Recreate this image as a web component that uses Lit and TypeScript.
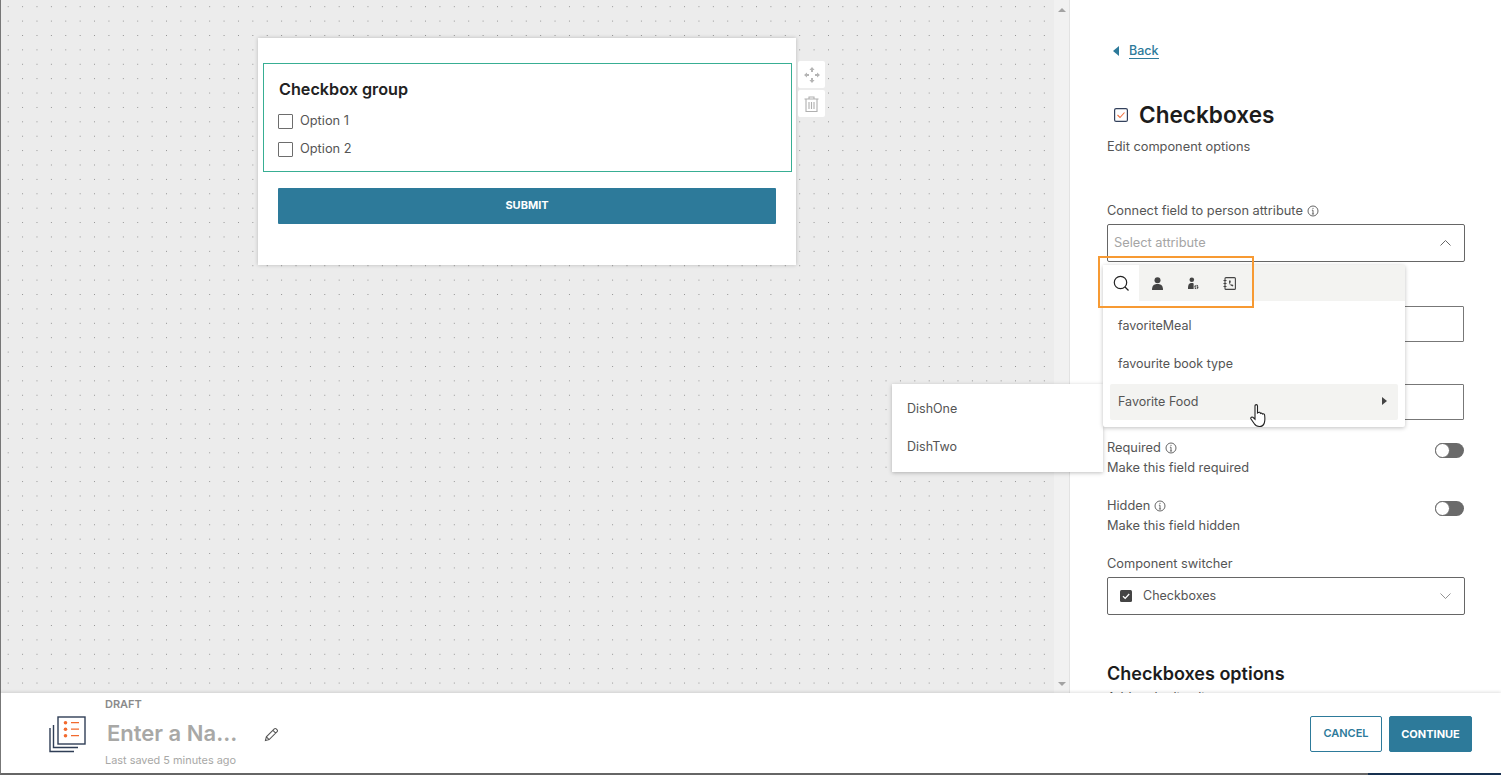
import { LitElement, html, css } from "lit";
import { customElement } from "lit/decorators.js";

const info = html`<svg class="info" width="12" height="12" viewBox="0 0 12 12" fill="none" stroke="#666" stroke-width="1"><circle cx="6" cy="6" r="5"/><path d="M6 5.200V9M4.900 9h2.200M4.900 5.200H6"/><circle cx="6" cy="3.300" r=".6" fill="#666" stroke="none"/></svg>`;

const toggle = html`<span class="toggle"><span class="knob"></span></span>`;

@customElement("app-root")
export class AppRoot extends LitElement {
  static styles = css`
    :host { display: flex; flex-direction: column; position: relative; width: 1501px; height: 775px; overflow: hidden; font-family: Inter, "Noto Sans", sans-serif; color: #555; font-size: 12.8px; background: #fff; }
    .main { display: flex; height: 693px; flex: none; }
    .canvas { width: 1054px; flex: none; background-color: #ececec; background-image: radial-gradient(circle at center, #8f8f8f 0, #8f8f8f .55px, transparent .9px); background-size: 14.4px 14.4px; background-position: 0 -.5px; display: flex; align-items: flex-start; padding: 38px 0 0 257px; box-sizing: border-box; gap: 2px; border-left: 1px solid #777; }
    .card { width: 538px; height: 227px; box-sizing: border-box; background: #fff; box-shadow: 0 0 4px rgba(0,0,0,.22); padding: 25px 4px 0 5px; flex: none; }
    .group { height: 109px; box-sizing: border-box; border: 1px solid #38ae93; padding: 15px 14px 0; }
    .group h3 { margin: 0 0 8px 1px; font-size: 16.200px; line-height: 20px; font-weight: 600; color: #222; }
    .opt { display: flex; align-items: center; gap: 7px; height: 28px; line-height: 16px; color: #555; font-size: 12.800px; }
    .box { width: 13px; height: 13px; border: 1px solid #6d6d6d; border-radius: 1px; flex: none; }
    .submit { margin: 16px 16px 0 15px; height: 36px; padding-bottom: 2px; box-sizing: border-box; display: flex; align-items: center; justify-content: center; background: #2d7a9a; color: #fff; font-size: 11px; font-weight: 700; border-radius: 1px; }
    .tools { display: flex; flex-direction: column; gap: 2px; padding-top: 23px; }
    .tool { width: 27px; height: 27px; background: #fff; border-radius: 2px; display: flex; align-items: center; justify-content: center; }
    .scroll { width: 16px; flex: none; background: #f1f1f1; display: flex; flex-direction: column; justify-content: space-between; align-items: center; padding: 8px 0 7px; box-sizing: border-box; border-right: 1px solid #e2e2e2; }
    .panel { flex: 1; min-width: 0; overflow: hidden; padding: 43px 36px 0 37px; box-sizing: border-box; }
    .back { display: flex; align-items: center; gap: 10px; height: 16px; margin-left: 6px; color: #2d7a9a; font-size: 12.500px; font-weight: 500; }
    .back span { border-bottom: 1px solid #2d7a9a; line-height: 15px; }
    .title { display: flex; align-items: center; gap: 11px; margin: 40px 0 0 7px; height: 32px; }
    .title h1 { margin: 0; font-size: 22.600px; line-height: 32px; font-weight: 600; color: #1c1c1c; }
    .sub { line-height: 16px; margin-top: 8px; }
    .lab { display: flex; align-items: center; gap: 4px; line-height: 16px; height: 16px; color: #555; }
    .select { height: 38px; box-sizing: border-box; border: 1px solid #666; border-radius: 2px; display: flex; align-items: center; padding: 0 13px 0 6px; justify-content: space-between; margin-top: 5px; }
    .ph { color: #a5a5a5; padding-bottom: 2px; }
    .input { height: 36px; box-sizing: border-box; border: 1px solid #777; margin-right: 1px; border-radius: 1px; }
    .toggle-row { display: flex; justify-content: space-between; align-items: flex-start; height: 40px; }
    .rowsub { line-height: 16px; margin-top: 4px; }
    .toggle { width: 29px; height: 15px; margin: 3px 1px 0 0; background: #6a6a6a; border-radius: 8px; display: block; position: relative; }
    .knob { position: absolute; left: 0; top: 0; width: 13px; height: 13px; border: 1px solid #6a6a6a; border-radius: 50%; background: #fff; }
    .switch-val { display: flex; align-items: center; gap: 11px; margin-left: 6px; font-size: 12.500px; padding-bottom: 1px; }
    .panel h2 { margin: 47px 0 0; font-size: 18px; line-height: 24px; font-weight: 600; color: #1c1c1c; }
    .clip { line-height: 16px; margin-top: 4px; }
    .footer { height: 82px; flex: none; box-sizing: border-box; background: #fff; border-left: 1px solid #777; border-bottom: 2px solid #666; box-shadow: 0 -1px 3px rgba(0,0,0,.12); position: relative; display: flex; align-items: flex-start; padding-left: 48px; }
    .footer::after { content: ""; position: absolute; right: 0; bottom: -2px; width: 133px; height: 2px; background: #17304f; }
    .logo { margin-top: 23px; flex: none; }
    .fmeta { margin-left: 18px; display: flex; flex-direction: column; }
    .draft { font-size: 11px; font-weight: 600; color: #8a8a8a; line-height: 12px; margin-top: 5px; }
    .name-row { display: flex; align-items: center; height: 34px; margin-top: 6px; padding-left: 2px; }
    .name { font-size: 22px; font-weight: 600; color: #a8a8a6; line-height: 30px; width: 157px; }
    .pencil { margin-top: 3px; }
    .saved { font-size: 10.900px; line-height: 14px; color: #a8a8a6; margin-top: 3px; }
    .actions { margin-left: auto; display: flex; gap: 7px; margin-top: 23px; padding-right: 29px; }
    .btn { height: 36px; box-sizing: border-box; display: flex; align-items: center; justify-content: center; font-size: 11px; font-weight: 600; border-radius: 2px; border: 1px solid #2d7a9a; }
    .cancel { width: 72px; color: #2d7a9a; background: #fff; padding-bottom: 2px; }
    .continue { width: 83px; color: #fff; background: #2d7a9a; font-weight: 700; }
    .menu { position: absolute; left: 1103px; top: 265px; width: 302px; height: 162px; background: #fff; box-shadow: 0 1px 4px rgba(0,0,0,.25); border-radius: 2px; }
    .tabs { display: flex; height: 36px; background: #f3f3f1; margin-bottom: 6px; }
    .tab { width: 36px; display: flex; align-items: center; justify-content: center; }
    .tab.on { background: #fff; }
    .item { height: 36px; margin: 0 7px 2px; display: flex; align-items: center; justify-content: space-between; padding: 0 11px 0 8px; border-radius: 2px; color: #555; font-size: 12.500px; box-sizing: border-box; }
    .item.hover { background: #f3f3f1; margin-top: 3px; padding-bottom: 2px; }
    .submenu { position: absolute; left: 892px; top: 384px; width: 211px; height: 88px; background: #fff; box-shadow: 0 1px 4px rgba(0,0,0,.25); padding: 5px 15px; box-sizing: border-box; }
    .submenu div { height: 38px; display: flex; align-items: center; color: #555; font-size: 12.500px; }
    .focus { position: absolute; left: 1098px; top: 256px; width: 156px; height: 52px; box-sizing: border-box; border: 2px solid #f79a33; pointer-events: none; }
    .cursor { position: absolute; left: 1250px; top: 404px; }
  `;

  render() {
    return html`
      <div class="main">
        <div class="canvas">
          <div class="card">
            <div class="group">
              <h3>Checkbox group</h3>
              <div class="opt"><span class="box"></span>Option 1</div>
              <div class="opt"><span class="box"></span>Option 2</div>
            </div>
            <div class="submit">SUBMIT</div>
          </div>
          <div class="tools">
            <div class="tool"><svg width="16" height="16" viewBox="0 0 16 16" fill="#b5b5b5"><path d="M8 0l2.600 3H9v2H7V3H5.400zM8 16l-2.600-3H7v-2h2v2h1.600zM0 8l3-2.600V7h2v2H3v1.600zM16 8l-3 2.600V9h-2V7h2V5.400z"/></svg></div>
            <div class="tool"><svg width="15" height="16" viewBox="0 0 15 16" fill="none" stroke="#b0b0b0" stroke-width="1.100"><path d="M.5 3h14M5 3V1h5v2M2 3v12.500h11V3M5 6v7M7.500 6v7M10 6v7"/></svg></div>
          </div>
        </div>
        <div class="scroll">
          <svg width="8" height="4" viewBox="0 0 8 4" fill="#a3a3a3"><path d="M4 0l4 4H0z"/></svg>
          <svg width="8" height="4" viewBox="0 0 8 4" fill="#a3a3a3"><path d="M0 0h8L4 4z"/></svg>
        </div>
        <div class="panel">
          <div class="back"><svg width="6" height="10" viewBox="0 0 6 10" fill="#2d7a9a"><path d="M6 0v10L0 5z"/></svg><span>Back</span></div>
          <div class="title">
            <svg width="14" height="14" viewBox="0 0 14 14" fill="none"><rect x=".6" y=".6" width="12.800" height="12.800" rx="1.500" stroke="#33415c" stroke-width="1.200"/><path d="M3.500 7l2.500 2.500L10.500 4.500" stroke="#f0703f" stroke-width="1.100"/></svg>
            <h1>Checkboxes</h1>
          </div>
          <div class="sub">Edit component options</div>
          <div class="lab" style="margin-top:48px">Connect field to person attribute ${info}</div>
          <div class="select"><span class="ph">Select attribute</span><svg width="11" height="6" viewBox="0 0 11 6" fill="none" stroke="#666"><path d="M.5 5.500l5-5 5 5"/></svg></div>
          <div class="input" style="margin-top:44px"></div>
          <div class="input" style="margin-top:42px"></div>
          <div class="toggle-row" style="margin-top:20px">
            <div><div class="lab">Required ${info}</div><div class="rowsub">Make this field required</div></div>${toggle}
          </div>
          <div class="toggle-row" style="margin-top:18px">
            <div><div class="lab">Hidden ${info}</div><div class="rowsub">Make this field hidden</div></div>${toggle}
          </div>
          <div class="lab" style="margin-top:18px">Component switcher</div>
          <div class="select">
            <span class="switch-val"><svg width="12" height="12" viewBox="0 0 12 12"><rect width="12" height="12" rx="1.500" fill="#444"/><path d="M3 6.200l2.200 2.200L9.200 4" fill="none" stroke="#fff" stroke-width="1.300"/></svg>Checkboxes</span>
            <svg width="11" height="6" viewBox="0 0 11 6" fill="none" stroke="#777" stroke-width=".8"><path d="M.5.500l5 5 5-5"/></svg>
          </div>
          <h2>Checkboxes options</h2>
          <div class="clip">Add and edit a list</div>
        </div>
      </div>
      <div class="footer">
        <svg class="logo" width="38" height="38" viewBox="0 0 38 38" fill="none">
          <path d="M1 12v23.500h24M4.500 9v22.500H29" stroke="#2f3e56" stroke-width="1.400"/>
          <rect x="9" y="1" width="27" height="27" fill="#fff" stroke="#2f3e56" stroke-width="1.400"/>
          <circle cx="16.500" cy="6.700" r="1.800" fill="#f26a2e"/><circle cx="16.500" cy="13.200" r="1.800" fill="#f26a2e"/><circle cx="16.500" cy="19.700" r="1.800" fill="#f26a2e"/>
          <path d="M22 6.700h8M22 13.200h8M22 19.700h8" stroke="#f26a2e" stroke-width="1.300"/>
        </svg>
        <div class="fmeta">
          <div class="draft">DRAFT</div>
          <div class="name-row"><span class="name">Enter a Na...</span>
            <svg class="pencil" width="15" height="15" viewBox="0 0 16 16" fill="none" stroke="#555" stroke-width="1.100"><path d="M1.500 14.500l1-4L11 2a1.400 1.400 0 0 1 2 0l1 1a1.400 1.400 0 0 1 0 2l-8.500 8.500zM9.500 3.500l3 3M2.500 10.500l3 3"/></svg>
          </div>
          <div class="saved">Last saved 5 minutes ago</div>
        </div>
        <div class="actions"><div class="btn cancel">CANCEL</div><div class="btn continue">CONTINUE</div></div>
      </div>
      <div class="submenu"><div>DishOne</div><div>DishTwo</div></div>
      <div class="menu">
        <div class="tabs">
          <div class="tab on"><svg width="17" height="17" viewBox="0 0 17 17" fill="none" stroke="#222" stroke-width="1.200"><circle cx="7.500" cy="7.500" r="6.200"/><path d="M12 12l3.500 3.500"/></svg></div>
          <div class="tab"><svg width="11" height="13" viewBox="0 0 11 13" fill="#444"><circle cx="5.500" cy="3.200" r="3"/><path d="M0 13c0-4 1.500-6 5.500-6s5.500 2 5.500 6z"/></svg></div>
          <div class="tab"><svg width="11" height="13" viewBox="0 0 11 13" fill="#444"><circle cx="3.800" cy="2.700" r="2.300"/><path d="M0 12c0-4 .6-6 3.800-6 .8 0 1.400.1 1.800.4V12z"/><circle cx="8.300" cy="10" r="1.500" fill="none" stroke="#444" stroke-width="1.400" stroke-dasharray="1.500 .7"/></svg></div>
          <div class="tab"><svg width="13" height="13" viewBox="0 0 13 13" fill="none" stroke="#444" stroke-width="1.100"><rect x="2" y=".6" width="10.400" height="11.800" rx="1"/><path d="M.5 3.500h3M.5 6.500h3M.5 9.500h3"/><path d="M6 3.500c-.3 3 1 5.500 4 6l.3-1.500-1.800-.8-.6.800c-.6-.6-.9-1.200-.9-2.200l.9-.4-.4-1.900z" fill="#444" stroke="none"/></svg></div>
        </div>
        <div class="item">favoriteMeal</div>
        <div class="item">favourite book type</div>
        <div class="item hover">Favorite Food<svg width="5" height="8" viewBox="0 0 5 8" fill="#444"><path d="M0 0l5 4-5 4z"/></svg></div>
      </div>
      <div class="focus"></div>
      <svg class="cursor" width="18" height="25" viewBox="0 0 18 25" fill="#fff" stroke="#222" stroke-width="1.100"><path d="M5 2c0-1.800 2.500-1.800 2.500 0v7l1-.6c.8-.4 1.700 0 1.800.6l.2.400c.8-.6 1.800-.2 2 .6.900-.5 2 0 2.100 1 .4 3 .4 6-.3 8-.6 2-2.200 3.500-5 3.500-2.600 0-4-1-5-2.700L1 15c-.8-1.400 1-2.700 2.200-1.500L5 15.200z"/></svg>
    `;
  }
}
